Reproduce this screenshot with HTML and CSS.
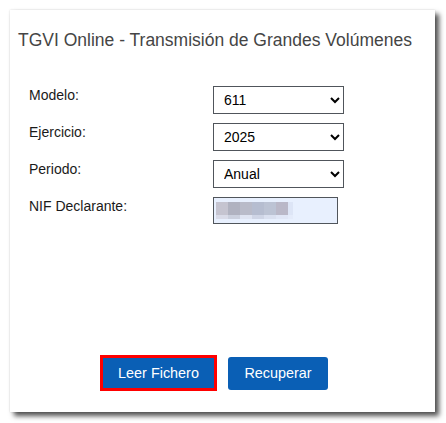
FILE: index.html
```html
<!DOCTYPE html>
<html lang="es">
<head>
    <meta charset="UTF-8">
    <meta name="viewport" content="width=device-width, initial-scale=1.0">
    <title>TGVI Online</title>
    <link rel="stylesheet" href="styles.css">
</head>
<body>
    <div class="page">
        <div class="card">
            <h1 class="title">TGVI Online - Transmisión de Grandes Volúmenes</h1>

            <div class="formGrid">
                <label class="fieldLabel" for="modelo">Modelo:</label>
                <select id="modelo" class="fieldSelect">
                    <option>611</option>
                </select>

                <label class="fieldLabel" for="ejercicio">Ejercicio:</label>
                <select id="ejercicio" class="fieldSelect">
                    <option>2025</option>
                </select>

                <label class="fieldLabel" for="periodo">Periodo:</label>
                <select id="periodo" class="fieldSelect">
                    <option>Anual</option>
                </select>

                <label class="fieldLabel">NIF Declarante:</label>
                <div class="nifBox">
                    <!-- NIF pixelado -->
                    <div class="mosaic">
                        <span></span><span></span><span></span><span></span><span></span><span></span><span></span>
                    </div>
                </div>
            </div>

            <div class="buttonRow">
                <button class="actionButton leerButton">Leer Fichero</button>
                <button class="actionButton">Recuperar</button>
            </div>
        </div>
    </div>
</body>
</html>
```

FILE: styles.css
```css
body {
    margin: 0;
    padding: 0;
    background-color: #ffffff;
    font-family: "Liberation Sans", Arial, sans-serif;
}

.page {
    padding: 10px 11px 11px 10px;
}

.card {
    width: 425px;
    height: 402px;
    box-sizing: border-box;
    background-color: #ffffff;
    padding: 19px 8px 21px 8px;
    display: flex;
    flex-direction: column;
    box-shadow: 4px 4px 5px rgba(0, 0, 0, 0.68), 0 0 2px rgba(0, 0, 0, 0.15);
}

.title {
    margin: 0;
    font-size: 17.5px;
    line-height: 22px;
    font-weight: normal;
    color: #454545;
}

.formGrid {
    display: grid;
    grid-template-columns: 184px 131px;
    row-gap: 9px;
    margin-top: 35px;
    padding-left: 11px;
}

.fieldLabel {
    font-size: 14px;
    color: #1a1a1a;
    padding-top: 1px;
}

.fieldSelect {
    width: 131px;
    height: 28px;
    font-family: inherit;
    font-size: 14px;
    color: #000000;
    background-color: #ffffff;
    border: 1px solid #50555b;
    border-radius: 0;
    padding: 0 0 0 6px;
    margin: 0;
}

.nifBox {
    width: 125px;
    height: 27px;
    box-sizing: border-box;
    background-color: #e8f0fe;
    border: 1px solid #50555b;
    padding: 4px 0 0 2px;
}

.mosaic {
    display: flex;
}

.mosaic span {
    width: 12px;
    height: 17px;
}

.mosaic span:nth-child(1) { background: linear-gradient(#c5c4d0 13px, #d9dbe8 13px); }
.mosaic span:nth-child(2) { background: linear-gradient(#b0b2c0 13px, #cbd0de 13px); }
.mosaic span:nth-child(3) { background: linear-gradient(#b9bbc9 13px, #dfe4f2 13px); }
.mosaic span:nth-child(4) { background: linear-gradient(#b6bdd0 13px, #cfd5e6 13px); }
.mosaic span:nth-child(5) { background: linear-gradient(#bcc3d4 13px, #dae0f0 13px); }
.mosaic span:nth-child(6) { background: linear-gradient(#bab8c8 13px, #e0e6f6 13px); }
.mosaic span:nth-child(7) { width: 5px; background: linear-gradient(#dde5f6 13px, #e4ebfa 13px); }

.buttonRow {
    margin-top: auto;
    display: flex;
    align-items: center;
    gap: 11px;
    padding-left: 82px;
}

.actionButton {
    font-family: inherit;
    font-size: 14.4px;
    color: #ffffff;
    background-color: #0a5fb5;
    border: none;
    border-radius: 3px;
    width: 100px;
    height: 33px;
    padding: 0;
}

.leerButton {
    width: 117px;
    height: 36px;
    border: 3px solid #ff0000;
    border-radius: 0;
}
```
